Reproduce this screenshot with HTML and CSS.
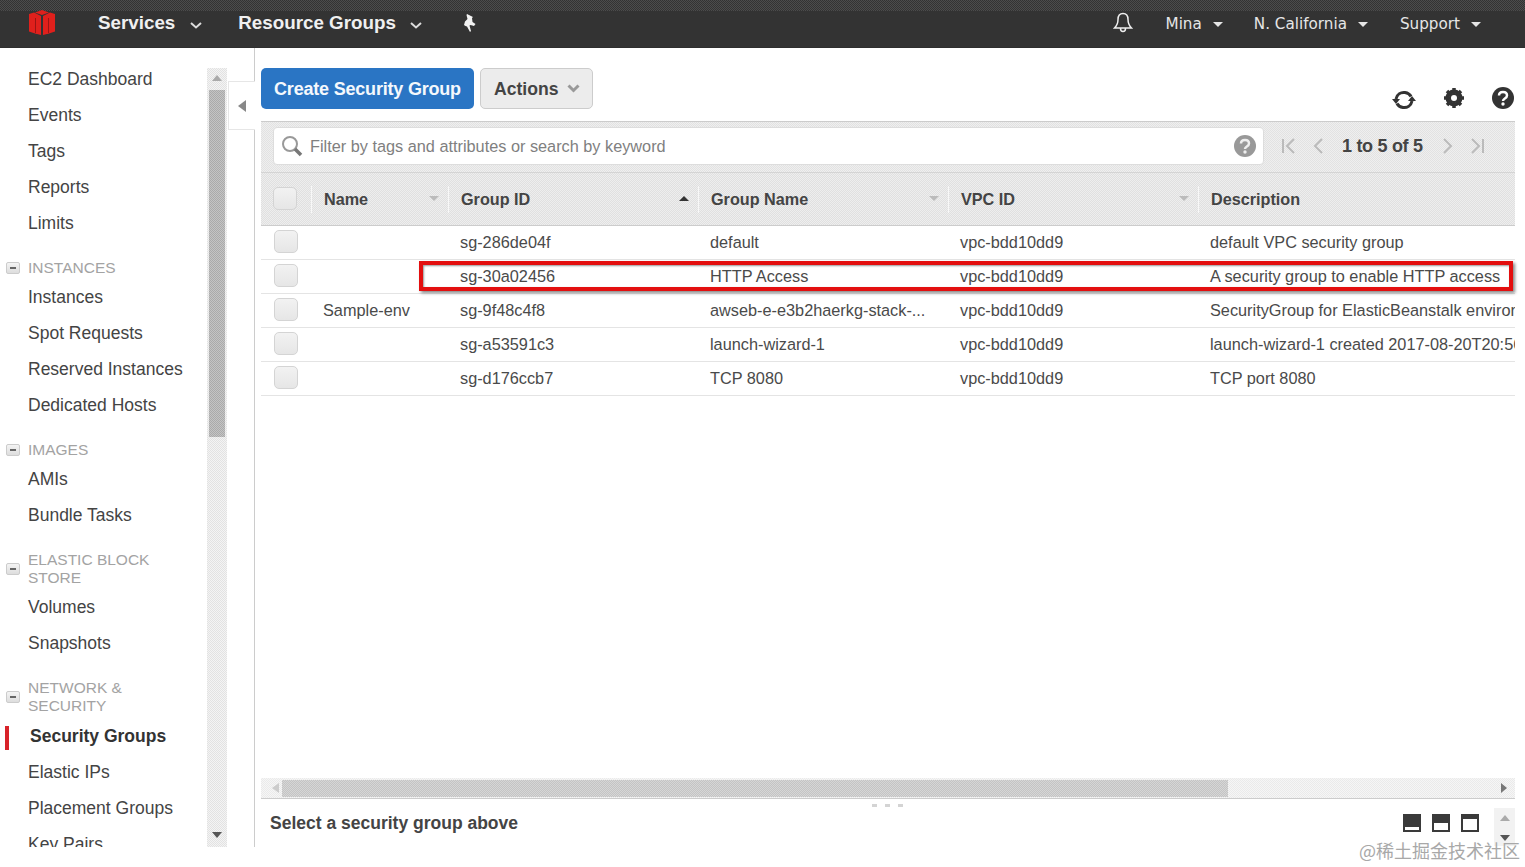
FILE: index.html
```html
<!DOCTYPE html>
<html lang="en">
<head>
<meta charset="utf-8">
<title>Security Groups</title>
<link rel="stylesheet" href="styles.css">
</head>
<body>
<header class="topbar">
  <svg class="logo" viewBox="0 0 26 25" width="26" height="25"><path fill="#e0201c" d="M13 0l7 2.500L13 5 6 2.500z"/><path fill="#e0201c" d="M0 4l5-1.500L12 6v19l-6-1.500-6-2z"/><path fill="#e0201c" d="M26 4l-5-1.500L14 6v19l6-1.500 6-2z"/><path fill="#9c1414" d="M6 8v15h1V8zM19 8v15h1V8z"/></svg>
  <span class="nav-main nav-services">Services</span>
  <svg class="chev" viewBox="0 0 12 7" width="12" height="7"><path d="M1 1l5 4.500L11 1" fill="none" stroke="#ddd" stroke-width="2"/></svg>
  <span class="nav-main nav-groups">Resource Groups</span>
  <svg class="chev chev-groups" viewBox="0 0 12 7" width="12" height="7"><path d="M1 1l5 4.500L11 1" fill="none" stroke="#ddd" stroke-width="2"/></svg>
  <svg class="pin" viewBox="0 0 16 18" width="16" height="18"><path fill="#f2f2f2" d="M5 0l6 3-1 1 .5 4 3 2-1.500 2-3.500-1-1 .5L9 17l-1 1-3-5.500-1.500-.5L2 11l1-3.500L5.500 5 4.500 1z"/></svg>
  <span class="spacer"></span>
  <svg class="bell" viewBox="0 0 20 21" width="20" height="21"><path fill="none" stroke="#eee" stroke-width="1.500" d="M10 1.500c-3.500 0-5 2.500-5 6 0 4-1 6-3.500 8.500h17C16 13.500 15 11.500 15 7.500c0-3.500-1.500-6-5-6zM7.500 16.500c0 4 5 4 5 0"/></svg>
  <span class="nav-sub nav-mina">Mina</span><i class="caret"></i>
  <span class="nav-sub nav-region">N. California</span><i class="caret"></i>
  <span class="nav-sub nav-support">Support</span><i class="caret"></i>
</header>

<div class="layout">
  <aside class="side">
    <nav class="menu">
      <a class="item">EC2 Dashboard</a>
      <a class="item">Events</a>
      <a class="item">Tags</a>
      <a class="item">Reports</a>
      <a class="item">Limits</a>
      <div class="sect"><i class="toggle"></i><span>INSTANCES</span></div>
      <a class="item">Instances</a>
      <a class="item">Spot Requests</a>
      <a class="item">Reserved Instances</a>
      <a class="item">Dedicated Hosts</a>
      <div class="sect"><i class="toggle"></i><span>IMAGES</span></div>
      <a class="item">AMIs</a>
      <a class="item">Bundle Tasks</a>
      <div class="sect"><i class="toggle"></i><span>ELASTIC BLOCK<br>STORE</span></div>
      <a class="item">Volumes</a>
      <a class="item">Snapshots</a>
      <div class="sect sect-net"><i class="toggle"></i><span>NETWORK &amp;<br>SECURITY</span></div>
      <a class="item active">Security Groups</a>
      <a class="item">Elastic IPs</a>
      <a class="item">Placement Groups</a>
      <a class="item">Key Pairs</a>
    </nav>
    <div class="vscroll">
      <i class="arrow-up"></i>
      <div class="vthumb"></div>
      <i class="arrow-down"></i>
    </div>
    <div class="collapse"><i class="arrow-left"></i></div>
  </aside>

  <main class="main">
    <div class="toolbar">
      <button class="btn-primary">Create Security Group</button>
      <button class="btn-actions">Actions<svg viewBox="0 0 13 9" width="13" height="9"><path d="M1.500 1.500l5 5 5-5" fill="none" stroke="#999" stroke-width="3"/></svg></button>
      <span class="spacer"></span>
      <svg class="tool tool-refresh" viewBox="0 0 26 22" width="26" height="22"><g fill="none" stroke="#333" stroke-width="3"><path d="M5 10c1-5 5-7 9-6.500 3 .5 5 2 6 4"/><path d="M21 12c-1 5-5 7-9 6.500-3-.5-5-2-6-4"/></g><path fill="#333" d="M1 10h8l-4 5zM25 12h-8l4-5z"/></svg>
      <svg class="tool tool-gear" viewBox="0 0 20 20" width="20" height="20"><circle cx="10" cy="10" r="6.500" fill="none" stroke="#333" stroke-width="4"/><g stroke="#333" stroke-width="3.500"><path d="M10 0v20M0 10h20M3 3l14 14M17 3L3 17"/></g><circle cx="10" cy="10" r="3" fill="#fff"/></svg>
      <svg class="tool tool-help" viewBox="0 0 22 22" width="22" height="22"><circle cx="11" cy="11" r="11" fill="#333"/><path d="M7 8.500C7 6 9 5 11 5s4 1 4 3.500c0 3-4 3-4 5.500" fill="none" stroke="#fff" stroke-width="2.500"/><circle cx="11" cy="17" r="1.700" fill="#fff"/></svg>
    </div>

    <div class="filterbar">
      <div class="filter">
        <svg class="search" viewBox="0 0 22 22" width="22" height="22"><circle cx="9" cy="9" r="7" fill="none" stroke="#999" stroke-width="2"/><path d="M14 14l6 6" stroke="#777" stroke-width="3.500"/></svg>
        <span class="filter-text">Filter by tags and attributes or search by keyword</span>
        <svg class="filter-help" viewBox="0 0 22 22" width="22" height="22"><circle cx="11" cy="11" r="11" fill="#999"/><path d="M7 8.500C7 6 9 5 11 5s4 1 4 3.500c0 3-4 3-4 5.500" fill="none" stroke="#eee" stroke-width="2.500"/><circle cx="11" cy="17" r="1.700" fill="#eee"/></svg>
      </div>
      <div class="pager">
        <svg viewBox="0 0 16 16" width="16" height="16"><path d="M2 1v14M13 1L6 8l7 7" fill="none" stroke="#bbb" stroke-width="2"/></svg>
        <svg class="pg-prev" viewBox="0 0 12 16" width="12" height="16"><path d="M10 1L3 8l7 7" fill="none" stroke="#bbb" stroke-width="2"/></svg>
        <span class="pg-text">1 to 5 of 5</span>
        <svg class="pg-next" viewBox="0 0 12 16" width="12" height="16"><path d="M2 1l7 7-7 7" fill="none" stroke="#bbb" stroke-width="2"/></svg>
        <svg class="pg-last" viewBox="0 0 16 16" width="16" height="16"><path d="M14 1v14M3 1l7 7-7 7" fill="none" stroke="#bbb" stroke-width="2"/></svg>
      </div>
    </div>

    <div class="thead grid">
      <div class="th th-check"><i class="check"></i></div>
      <div class="th">Name<i class="sort"></i></div>
      <div class="th">Group ID<i class="sort sort-up"></i></div>
      <div class="th">Group Name<i class="sort"></i></div>
      <div class="th">VPC ID<i class="sort"></i></div>
      <div class="th">Description</div>
    </div>

    <div class="rows">
      <div class="row grid"><div class="td"><i class="check"></i></div><div class="td"></div><div class="td">sg-286de04f</div><div class="td">default</div><div class="td">vpc-bdd10dd9</div><div class="td">default VPC security group</div></div>
      <div class="row grid"><div class="td"><i class="check"></i></div><div class="td"></div><div class="td">sg-30a02456</div><div class="td">HTTP Access</div><div class="td">vpc-bdd10dd9</div><div class="td">A security group to enable HTTP access</div></div>
      <div class="row grid"><div class="td"><i class="check"></i></div><div class="td">Sample-env</div><div class="td">sg-9f48c4f8</div><div class="td">awseb-e-e3b2haerkg-stack-...</div><div class="td">vpc-bdd10dd9</div><div class="td">SecurityGroup for ElasticBeanstalk environment</div></div>
      <div class="row grid"><div class="td"><i class="check"></i></div><div class="td"></div><div class="td">sg-a53591c3</div><div class="td">launch-wizard-1</div><div class="td">vpc-bdd10dd9</div><div class="td">launch-wizard-1 created 2017-08-20T20:56:12</div></div>
      <div class="row grid"><div class="td"><i class="check"></i></div><div class="td"></div><div class="td">sg-d176ccb7</div><div class="td">TCP 8080</div><div class="td">vpc-bdd10dd9</div><div class="td">TCP port 8080</div></div>
      <div class="highlight"></div>
    </div>

    <div class="hscroll">
      <i class="arrow-left small"></i>
      <div class="hthumb"></div>
      <i class="arrow-right"></i>
    </div>

    <div class="detail">
      <span class="detail-text">Select a security group above</span>
      <div class="grip"><i></i><i></i><i></i></div>
      <div class="panes">
        <i class="pane pane-low"></i>
        <i class="pane pane-mid"></i>
        <i class="pane pane-high"></i>
      </div>
      <div class="miniscroll"><i class="arrow-up"></i><i class="arrow-down"></i></div>
    </div>
  </main>
</div>
<div class="watermark">@稀土掘金技术社区</div>
</body>
</html>
```

FILE: styles.css
```css
* { box-sizing: border-box; }
html, body { margin: 0; padding: 0; height: 867px; overflow: hidden; background: #fff; }
body { font-family: "Liberation Sans", Arial, sans-serif; color: #444; position: relative; }
i { display: block; }
.spacer { flex: 1; }

/* top bar */
.topbar { height: 48px; display: flex; align-items: center; padding: 0 0 2px 29px; background: #333; border-bottom: 1px solid #2e2e2e; position: relative; }
.topbar::before { content: ""; position: absolute; left: 0; right: 0; top: 0; height: 11px; background: repeating-conic-gradient(#4c4c4c 0 25%, #333 0 50%) 0 0 / 2px 2px; }
.logo { margin-right: 43px; position: relative; }
.nav-main { color: #f0f0f0; font-size: 18.800px; font-weight: bold; position: relative; }
.chev { margin-left: 15px; margin-top: 5px; }
.chev-groups { margin-left: 14px; }
.nav-groups { margin-left: 36px; }
.pin { margin-left: 40px; }
.bell { margin-right: 33px; position: relative; }
.nav-sub { color: #e6e6e6; font-family: "DejaVu Sans", sans-serif; font-size: 15.200px; margin-top: 3px; }
.caret { width: 0; height: 0; border: 5px solid transparent; border-top: 5px solid #e6e6e6; border-bottom: 0; margin-left: 11px; margin-top: 3px; }
.nav-region { margin-left: 31px; }
.nav-support { margin-left: 32px; }
.nav-support + .caret { margin-right: 44px; }

/* layout */
.layout { display: flex; height: 799px; }
.side { width: 255px; flex: none; display: flex; border-right: 1px solid #ccc; position: relative; }
.menu { width: 207px; flex: none; height: 799px; overflow: hidden; padding-top: 13px; }
.item { display: block; height: 36px; line-height: 36px; padding-left: 28px; font-size: 17.500px; color: #444; white-space: nowrap; }
.item.active { font-weight: bold; color: #333; position: relative; padding-left: 30px; }
.item.active::before { content: ""; position: absolute; left: 5px; top: 8px; width: 4px; height: 24px; background: #d8232a; }
.sect { display: flex; align-items: center; gap: 8px; padding-left: 6px; margin: 18px 0 2px; font-size: 15.500px; line-height: 18px; color: #a3a3a3; }
.sect-net { margin-bottom: 3px; }
.toggle { width: 14px; height: 12px; border: 1px solid #ccc; border-radius: 2px; background: linear-gradient(#f4f4f4, #ddd); position: relative; }
.toggle::after { content: ""; position: absolute; left: 3px; top: 4px; width: 6px; height: 2px; background: #666; }

.vscroll { width: 20px; flex: none; margin-top: 20px; background: repeating-conic-gradient(#e2e2e2 0 25%, #f4f4f4 0 50%) 0 0 / 2px 2px; display: flex; flex-direction: column; position: relative; }
.vscroll .arrow-up { margin: 7px auto 0; }
.vthumb { height: 347px; margin: 9px 2px 0; background: repeating-conic-gradient(#aaa 0 25%, #c4c4c4 0 50%) 0 0 / 2px 2px; }
.vscroll .arrow-down { position: absolute; left: 5px; bottom: 9px; }
.arrow-up { width: 0; height: 0; border: 5px solid transparent; border-top: 0; border-bottom: 6px solid #aaa; }
.arrow-down { width: 0; height: 0; border: 5px solid transparent; border-bottom: 0; border-top: 6px solid #555; }
.arrow-left { width: 0; height: 0; border: 6px solid transparent; border-left: 0; border-right: 8px solid #888; }
.arrow-left.small { border-width: 5px 7px 5px 0; border-color: transparent #ccc transparent transparent; }
.arrow-right { width: 0; height: 0; border: 5px solid transparent; border-right: 0; border-left: 6px solid #777; }
.collapse { position: absolute; left: 228px; top: 33px; width: 27px; height: 49px; background: #fff; border: 1px solid #e6e6e6; border-right: 0; display: flex; align-items: center; padding-left: 9px; }

/* main */
.main { flex: 1; min-width: 0; display: flex; flex-direction: column; padding: 20px 10px 0 6px; }
.toolbar { height: 53px; flex: none; display: flex; align-items: flex-start; }
button { font-family: inherit; font-weight: bold; cursor: pointer; }
.btn-primary { width: 213px; height: 41px; border: 0; border-radius: 5px; background: #2a75c4; color: #f4f8fc; font-size: 18px; letter-spacing: -0.2px; padding: 2px 0 0; }
.btn-actions { width: 113px; height: 41px; margin-left: 6px; border: 1px solid #ccc; border-radius: 5px; background: #ececec; color: #444; font-size: 17.600px; display: flex; align-items: center; padding: 2px 0 0 13px; gap: 8px; }
.btn-actions svg { margin-top: -3px; }
.tool { flex: none; }
.tool-refresh { margin-top: 21px; margin-right: 27px; }
.tool-gear { margin-top: 20px; margin-right: 28px; }
.tool-help { margin-top: 19px; margin-right: 1px; }

.filterbar { height: 52px; flex: none; border-top: 1px solid #ccc; border-bottom: 1px solid #d4d4d4; background: repeating-conic-gradient(#e2e2e2 0 25%, #efefef 0 50%) 0 0 / 2px 2px; display: flex; align-items: center; padding: 0 0 2px 12px; }
.filter { width: 991px; height: 38px; flex: none; background: #fff; border: 1px solid #ddd; border-radius: 4px; display: flex; align-items: center; padding: 0 7px; }
.search { margin-right: 7px; }
.filter-text { flex: 1; font-size: 16.300px; color: #808080; }
.pager { display: flex; align-items: center; margin-left: 17px; }
.pg-prev { margin-left: 15px; }
.pg-text { margin: 0 19px 0 18px; font-size: 18px; font-weight: bold; color: #444; letter-spacing: -0.3px; white-space: nowrap; }
.pg-last { margin-left: 15px; }

.grid { display: grid; grid-template-columns: 50px 137px 250px 250px 250px minmax(0, 1fr); }
.thead { height: 53px; flex: none; background: repeating-conic-gradient(#e0e0e0 0 25%, #eee 0 50%) 0 0 / 2px 2px; border-bottom: 1px solid #ccc; align-items: center; }
.th { position: relative; height: 27px; line-height: 24px; padding: 1px 0 0 12px; font-size: 16.200px; font-weight: bold; color: #444; border-left: 1px solid #f8f8f8; }
.th-check { border-left: 0; padding-left: 12px; }
.sort { position: absolute; right: 9px; top: 10px; width: 0; height: 0; border: 5px solid transparent; border-bottom: 0; border-top: 5px solid #bbb; }
.sort.sort-up { border-top: 0; border-bottom: 5px solid #333; }
.check { width: 24px; height: 23px; border: 1px solid #d4d4d4; border-radius: 5px; background: linear-gradient(#f2f2f2, #e6e6e6); }

.rows { flex: 1; min-height: 0; position: relative; }
.row { height: 34px; border-bottom: 1px solid #e4e4e4; align-items: center; }
.td { font-size: 16.300px; line-height: 33px; color: #4a4a4a; padding-left: 12px; white-space: nowrap; overflow: hidden; }
.td:nth-child(1) { padding-left: 13px; height: 33px; display: flex; align-items: center; overflow: visible; }
.td .check { margin-top: -2px; }
.highlight { position: absolute; left: 158px; top: 35px; width: 1094px; height: 30px; border: 4px solid #e30f0f; box-shadow: 2px 2px 3px #888, inset 1px 1px 2px #999; }

.hscroll { height: 21px; flex: none; border-bottom: 1px solid #ccc; background: repeating-conic-gradient(#eaeaea 0 25%, #f6f6f6 0 50%) 0 0 / 2px 2px; display: flex; align-items: center; padding: 0 8px 0 11px; }
.hthumb { width: 946px; height: 17px; margin-left: 3px; background: repeating-conic-gradient(#c4c4c4 0 25%, #d6d6d6 0 50%) 0 0 / 2px 2px; }
.hscroll .arrow-right { margin-left: auto; }

.detail { height: 48px; flex: none; display: flex; align-items: center; padding-left: 9px; position: relative; }
.detail-text { font-size: 17.500px; font-weight: bold; color: #444; }
.grip { position: absolute; left: 611px; top: 5px; display: flex; gap: 8px; }
.grip i { width: 5px; height: 3px; background: #d4d4d4; }
.panes { margin-left: auto; margin-right: 15px; display: flex; gap: 11px; }
.pane { width: 18px; height: 18px; border: 2px solid #3a3a3a; background: linear-gradient(#3a3a3a var(--fill), #fff var(--fill)); }
.pane-low { --fill: 78%; }
.pane-mid { --fill: 50%; }
.pane-high { --fill: 20%; }
.miniscroll { width: 21px; height: 38px; margin-top: 7px; background: #f2f2f2; display: flex; flex-direction: column; align-items: center; justify-content: space-between; padding: 7px 0 5px; }

/* watermark */
.watermark { position: absolute; left: 1359px; top: 839px; font-family: "Noto Sans CJK SC", sans-serif; font-size: 18px; line-height: 22px; color: #a8a8a8; white-space: nowrap; }
```
